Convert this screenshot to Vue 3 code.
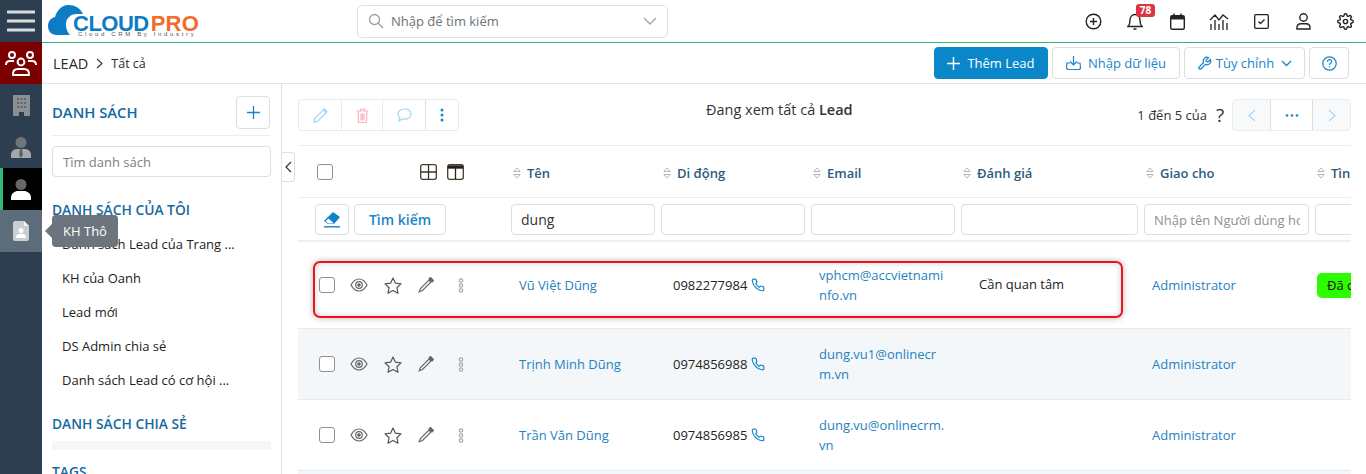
<script setup>
const lists = ['Danh sách Lead của Trang ...', 'KH của Oanh', 'Lead mới', 'DS Admin chia sẻ', 'Danh sách Lead có cơ hội ...']
const heads = ['Tên', 'Di động', 'Email', 'Đánh giá', 'Giao cho', 'Tìn']
const rows = [
  { name: 'Vũ Việt Dũng', phone: '0982277984', email: 'vphcm@accvietnaminfo.vn', rate: 'Cần quan tâm', badge: 'Đã chuyển', cls: 'first' },
  { name: 'Trịnh Minh Dũng', phone: '0974856988', email: 'dung.vu1@onlinecrm.vn', rate: '', badge: '', cls: 'alt' },
  { name: 'Trần Văn Dũng', phone: '0974856985', email: 'dung.vu@onlinecrm.vn', rate: '', badge: '', cls: '' }
]
const gear = 'M19.4 15a1.65 1.65 0 0 0 .33 1.82l.06.06a2 2 0 0 1 0 2.83 2 2 0 0 1-2.83 0l-.06-.06a1.65 1.65 0 0 0-1.82-.33 1.65 1.65 0 0 0-1 1.51V21a2 2 0 0 1-2 2 2 2 0 0 1-2-2v-.09A1.65 1.65 0 0 0 9 19.4a1.65 1.65 0 0 0-1.82.33l-.06.06a2 2 0 0 1-2.83 0 2 2 0 0 1 0-2.83l.06-.06a1.65 1.65 0 0 0 .33-1.82 1.65 1.65 0 0 0-1.51-1H3a2 2 0 0 1-2-2 2 2 0 0 1 2-2h.09A1.65 1.65 0 0 0 4.6 9a1.65 1.65 0 0 0-.33-1.82l-.06-.06a2 2 0 0 1 0-2.83 2 2 0 0 1 2.83 0l.06.06a1.65 1.65 0 0 0 1.82.33H9a1.65 1.65 0 0 0 1-1.51V3a2 2 0 0 1 2-2 2 2 0 0 1 2 2v.09a1.65 1.65 0 0 0 1 1.51 1.65 1.65 0 0 0 1.82-.33l.06-.06a2 2 0 0 1 2.83 0 2 2 0 0 1 0 2.83l-.06.06a1.65 1.65 0 0 0-.33 1.82V9a1.65 1.65 0 0 0 1.51 1H21a2 2 0 0 1 2 2 2 2 0 0 1-2 2h-.09a1.65 1.65 0 0 0-1.51 1z'
const phone = 'M22 16.92v3a2 2 0 0 1-2.18 2 19.8 19.8 0 0 1-8.63-3.07 19.5 19.5 0 0 1-6-6 19.8 19.8 0 0 1-3.07-8.67A2 2 0 0 1 4.11 2h3a2 2 0 0 1 2 1.72c.13.96.36 1.9.7 2.81a2 2 0 0 1-.45 2.11L8.09 9.91a16 16 0 0 0 6 6l1.27-1.27a2 2 0 0 1 2.11-.45c.91.34 1.85.57 2.81.7A2 2 0 0 1 22 16.92z'
</script>

<template>
  <div class="app">
    <nav class="rail">
      <div class="rail-item">
        <svg width="28" height="22" viewBox="0 0 28 22"><path d="M1 2h26M1 11h26M1 20h26" stroke="#d9dde0" stroke-width="3" stroke-linecap="round"/></svg>
      </div>
      <div class="rail-item red">
        <svg width="32" height="28" viewBox="0 0 32 28" fill="none" stroke="#fff" stroke-width="2">
          <circle cx="7" cy="6" r="3"/><circle cx="25" cy="6" r="3"/><circle cx="16" cy="13" r="3.4"/>
          <path d="M1 16c0-3 2-4 4-4h4M31 16c0-3-2-4-4-4h-4"/>
          <path d="M8 26v-1c0-3 2-5 5-5h6c3 0 5 2 5 5v1z" stroke-linejoin="round"/>
        </svg>
      </div>
      <div class="rail-item">
        <svg width="17" height="21" viewBox="0 0 17 21"><path d="M0 0h17v21h-6v-4H6v4H0z" fill="#8a8f94"/><g fill="#5e656c"><rect x="4" y="3" width="2" height="2"/><rect x="7.5" y="3" width="2" height="2"/><rect x="11" y="3" width="2" height="2"/><rect x="4" y="7" width="2" height="2"/><rect x="7.5" y="7" width="2" height="2"/><rect x="11" y="7" width="2" height="2"/><rect x="4" y="11" width="2" height="2"/><rect x="7.5" y="11" width="2" height="2"/><rect x="11" y="11" width="2" height="2"/></g></svg>
      </div>
      <div class="rail-item">
        <svg width="20" height="21" viewBox="0 0 20 21"><circle cx="10" cy="5.5" r="5.5" fill="#6f757b"/><path d="M0 21v-3c0-4 3-6 6-6h8c3 0 6 2 6 6v3z" fill="#a4a8ac"/><path d="M9 12h2l1 6-2 3-2-3z" fill="#5b636b"/></svg>
      </div>
      <div class="rail-item active">
        <svg width="20" height="21" viewBox="0 0 20 21"><circle cx="10" cy="5.5" r="5.5" fill="#666"/><path d="M0 21v-2c0-5 4-7 7-7h6c3 0 7 2 7 7v2z" fill="#fff"/></svg>
      </div>
      <div class="rail-item hover">
        <svg width="16" height="20" viewBox="0 0 16 20"><path d="M2 0h9l5 5v13a2 2 0 0 1-2 2H2a2 2 0 0 1-2-2V2a2 2 0 0 1 2-2z" fill="#c9ced3"/><path d="M11 0l5 5h-5z" fill="#f4f5f6"/><circle cx="8" cy="9.5" r="2.5" fill="#fff"/><path d="M3 17v-1c0-2 2-3 3-3h4c1 0 3 1 3 3v1z" fill="#fff"/></svg>
      </div>
      <div class="tip">KH Thô</div>
    </nav>

    <div class="main">
      <header class="topbar">
        <div class="logo">
          <svg class="cloud" width="42" height="32" viewBox="0 0 42 32"><path d="M9 31C3 31 0 27 0 22c0-5 3-8 7-9 2-7 7-12 13-12 7 0 12 3 15 9h-6c-7 0-11 5-11 10 0 4 1 8 4 11z" fill="#0e7cc4"/></svg>
          <span class="logo-a">CLOUD</span><span class="logo-b">PRO</span>
          <span class="logo-c">Cloud CRM By Industry</span>
        </div>
        <div class="gsearch">
          <svg width="16" height="16" viewBox="0 0 16 16" fill="none" stroke="#9aa0a6" stroke-width="1.3"><circle cx="6.5" cy="6.5" r="5"/><path d="M10.2 10.2 15 15"/></svg>
          <span class="gs-text">Nhập để tìm kiếm</span>
          <svg width="14" height="8" viewBox="0 0 14 8" fill="none" stroke="#a2a6aa" stroke-width="1.3"><path d="M1 1l6 6 6-6"/></svg>
        </div>
        <div class="tools">
          <div class="tool"><svg width="17" height="17" viewBox="0 0 17 17" fill="none" stroke="#222" stroke-width="1.4"><circle cx="8.5" cy="8.5" r="7.3"/><path d="M8.5 5v7M5 8.5h7"/></svg></div>
          <div class="tool">
            <svg width="16" height="19" viewBox="0 0 16 19" fill="none" stroke="#222" stroke-width="1.4"><path d="M1 14.5h14c-1.5-1.5-2-3-2-6.500C13 5 11 2.500 8 2.500S3 5 3 8c0 3.500-.5 5-2 6.500zM6.500 17h3"/></svg>
            <span class="count">78</span>
          </div>
          <div class="tool"><svg width="15" height="17" viewBox="0 0 15 17"><rect x=".7" y="2.700" width="13.600" height="13.600" rx="1.500" fill="none" stroke="#222" stroke-width="1.400"/><path d="M1 3h13v3.500H1z" fill="#222"/><path d="M4 .5v3M11 .5v3" stroke="#222" stroke-width="1.400"/></svg></div>
          <div class="tool"><svg width="20" height="17" viewBox="0 0 20 17" fill="none" stroke="#222" stroke-width="1.300"><path d="M1 7l5-5 4 5 4-5 5 4"/><path d="M2 11v6M6 7v10M10 11v6M14 7v10M18 10v7"/></svg></div>
          <div class="tool"><svg width="15" height="15" viewBox="0 0 15 15" fill="none" stroke="#222" stroke-width="1.300"><rect x=".7" y=".7" width="13.600" height="13.600" rx="1"/><path d="M4.500 7.500l2 2 4-4"/></svg></div>
          <div class="tool"><svg width="15" height="17" viewBox="0 0 15 17" fill="none" stroke="#222" stroke-width="1.400"><circle cx="7.500" cy="4.500" r="3.700"/><path d="M1 16v-1.500C1 12 3 10.700 5 10.700h5c2 0 4 1.300 4 3.800V16z"/></svg></div>
          <div class="tool"><svg width="17" height="17" viewBox="0 0 24 24" fill="none" stroke="#222" stroke-width="2"><circle cx="12" cy="12" r="3"/><path :d="gear"/></svg></div>
        </div>
      </header>

      <div class="subbar">
        <div class="crumb"><span class="c1">LEAD</span>
          <svg width="7" height="11" viewBox="0 0 7 11" fill="none" stroke="#333" stroke-width="1.100"><path d="M1 1l5 4.500L1 10"/></svg>
          <span class="c2">Tất cả</span></div>
        <div class="actions">
          <button class="btn primary"><svg width="13" height="13" viewBox="0 0 13 13" stroke="#fff" stroke-width="1.500"><path d="M6.500 0v13M0 6.500h13"/></svg>Thêm Lead</button>
          <button class="btn wide1"><svg width="15" height="14" viewBox="0 0 15 14" fill="none" stroke="#1a85c8" stroke-width="1.200"><path d="M7.500 0v9M4 5.500l3.500 3.500L11 5.500M4 7H1l-.5 4.500a2 2 0 0 0 2 2h10a2 2 0 0 0 2-2L14 7h-3"/></svg>Nhập dữ liệu</button>
          <button class="btn wide2"><svg width="15" height="15" viewBox="0 0 24 24" fill="none" stroke="#1a85c8" stroke-width="2"><path d="M14.700 6.300a1 1 0 0 0 0 1.400l1.600 1.600a1 1 0 0 0 1.400 0l3.770-3.770a6 6 0 0 1-7.940 7.940l-6.910 6.910a2.120 2.120 0 0 1-3-3l6.910-6.910a6 6 0 0 1 7.940-7.940l-3.760 3.760z"/></svg>Tùy chỉnh<svg width="11" height="7" viewBox="0 0 11 7" fill="none" stroke="#1a85c8" stroke-width="1.300"><path d="M1 1l4.500 4.500L10 1"/></svg></button>
          <button class="btn help"><svg width="15" height="15" viewBox="0 0 15 15" fill="none" stroke="#1a85c8" stroke-width="1.200"><circle cx="7.500" cy="7.500" r="6.700"/><path d="M5.300 5.800c0-1.300 1-2.100 2.200-2.100 1.300 0 2.200.8 2.200 1.900 0 1.700-2.200 1.600-2.200 3.400M7.500 10.300v1.300"/></svg></button>
        </div>
      </div>

      <div class="body">
        <aside class="side">
          <div class="side-head"><h3>DANH SÁCH</h3>
            <button class="plus"><svg width="13" height="13" viewBox="0 0 13 13" stroke="#1a85c8" stroke-width="1.300"><path d="M6.500 0v13M0 6.500h13"/></svg></button>
          </div>
          <div class="side-input">Tìm danh sách</div>
          <h3 class="sec-my">DANH SÁCH CỦA TÔI</h3>
          <ul><li v-for="l in lists" :key="l">{{ l }}</li></ul>
          <h3 class="sec-share">DANH SÁCH CHIA SẺ</h3>
          <div class="empty"></div>
          <h3 class="sec-tags">TAGS</h3>
        </aside>

        <div class="collapse"><svg width="7" height="12" viewBox="0 0 7 12" fill="none" stroke="#333" stroke-width="1.200"><path d="M6 1L1 6l5 5"/></svg></div>

        <section class="content">
          <div class="toolbar">
            <div class="group">
              <span class="cell c43"><svg width="15" height="15" viewBox="0 0 16 16" fill="none" stroke="#a4d7f5" stroke-width="1.300"><path d="M11 2l3 3-9 9-4 1 1-4z"/><path d="M11 2l1-1 3 3-1 1z" fill="#a4d7f5"/></svg></span>
              <span class="cell c41"><svg width="13" height="15" viewBox="0 0 13 15" fill="none" stroke="#f7b6bd" stroke-width="1.200"><path d="M.5 3h12M4.500 3V1h4v2M2 3l.6 11.500h7.800L11 3M5 5.500v7M6.500 5.500v7M8 5.500v7"/></svg></span>
              <span class="cell c43"><svg width="15" height="14" viewBox="0 0 15 14" fill="none" stroke="#a4d7f5" stroke-width="1.200"><path d="M7.500 1C3.500 1 1 3.200 1 6c0 1.400.7 2.600 1.800 3.500L2 13l3.500-2c.6.200 1.300.2 2 .2 4 0 6.500-2.300 6.500-5.200S11.500 1 7.500 1z"/></svg></span>
              <span class="cell dots"><svg width="4" height="14" viewBox="0 0 4 14" fill="#1a85c8"><circle cx="2" cy="2" r="1.500"/><circle cx="2" cy="7" r="1.500"/><circle cx="2" cy="12" r="1.500"/></svg></span>
            </div>
            <div class="title">Đang xem tất cả <b>Lead</b></div>
            <div class="pager">
              <span class="count-text">1 đến 5 của</span>
              <span class="q">?</span>
              <div class="pgroup">
                <span class="pcell p1"><svg width="8" height="13" viewBox="0 0 8 13" fill="none" stroke="#a4d7f5" stroke-width="1.200"><path d="M7 1L1 6.500 7 12"/></svg></span>
                <span class="pcell p2"><svg width="14" height="3" viewBox="0 0 14 3" fill="#1a85c8"><circle cx="2" cy="1.500" r="1.300"/><circle cx="7" cy="1.500" r="1.300"/><circle cx="12" cy="1.500" r="1.300"/></svg></span>
                <span class="pcell p3"><svg width="8" height="13" viewBox="0 0 8 13" fill="none" stroke="#a4d7f5" stroke-width="1.200"><path d="M1 1l6 5.500L1 12"/></svg></span>
              </div>
            </div>
          </div>

          <div class="table">
            <div class="grid head">
              <div class="h-first">
                <span class="box hbox"></span>
                <span class="hicons">
                  <svg width="17" height="16" viewBox="0 0 17 16" fill="none" stroke="#333" stroke-width="1.300"><rect x=".7" y=".7" width="15.600" height="14.600" rx="2" stroke="#4a3a2a"/><path d="M8.500 1v14M1 8h15"/></svg>
                  <svg width="17" height="16" viewBox="0 0 17 16" fill="none" stroke="#222" stroke-width="1.300"><rect x=".7" y=".7" width="15.600" height="14.600" rx="2" stroke="#4a3a2a"/><path d="M1 3h15" stroke-width="3.400"/><path d="M8.500 4v11"/></svg>
                </span>
              </div>
              <div v-for="h in heads" :key="h" class="hcell">
                <svg width="8" height="12" viewBox="0 0 8 12" fill="none" stroke="#b5b8bb"><path d="M.8 4.500 4 1l3.200 3.500zM.8 7.500 4 11l3.200-3.500z"/></svg>{{ h }}
              </div>
            </div>

            <div class="grid filters">
              <div class="f-first">
                <button class="erase"><svg width="18" height="16" viewBox="0 0 18 16"><path d="M10 0l7 5-6 7H5L1 9z" fill="#0f83c9"/><path d="M5.500 6.500 11 11.500H5.300L2.600 9.300z" fill="#fff"/><path d="M1 14.800h16" stroke="#0f83c9" stroke-width="1.400"/></svg></button>
                <button class="find">Tìm kiếm</button>
              </div>
              <div class="fcell"><div class="finput val">dung</div></div>
              <div class="fcell"><div class="finput"></div></div>
              <div class="fcell"><div class="finput"></div></div>
              <div class="fcell"><div class="finput"></div></div>
              <div class="fcell"><div class="finput ph"><span>Nhập tên Người dùng hoặc Nhóm</span></div></div>
              <div class="fcell"><div class="finput"></div></div>
            </div>

            <div v-for="r in rows" :key="r.name" class="grid row" :class="r.cls">
              <div class="r-first">
                <span class="box"></span>
                <svg class="ri" width="18" height="14" viewBox="0 0 18 14" fill="none" stroke="#666" stroke-width="1.200"><path d="M1 7c2-3.700 5-6 8-6s6 2.300 8 6c-2 3.700-5 6-8 6S3 10.700 1 7z"/><circle cx="9" cy="7" r="3.300"/><circle cx="9" cy="7" r="1.200" fill="#666"/></svg>
                <svg class="ri" width="18" height="17" viewBox="0 0 18 17" fill="none" stroke="#555" stroke-width="1.200"><path d="M9 1l2.400 5.200 5.600.7-4.100 3.800 1.100 5.600L9 13.500l-5 2.800 1.100-5.600L1 6.900l5.600-.7z" stroke-linejoin="round"/></svg>
                <svg class="ri" width="16" height="16" viewBox="0 0 16 16" fill="none" stroke="#666" stroke-width="1.200"><path d="M11 3l2 2-8.500 8.500-3.300 1.300 1.300-3.300z"/><path d="M11.500 1.500l1-1 3 3-1.500 1.500-3-3z" fill="#666"/></svg>
                <svg class="rdots" width="6" height="15" viewBox="0 0 6 15" fill="none" stroke="#a3a8ac" stroke-width="1.200"><circle cx="3" cy="2.500" r="1.700"/><circle cx="3" cy="7.500" r="1.700"/><circle cx="3" cy="12.500" r="1.700"/></svg>
              </div>
              <div class="name link">{{ r.name }}</div>
              <div class="tel">{{ r.phone }}<svg width="14" height="14" viewBox="0 0 24 24" fill="none" stroke="#1a85c8" stroke-width="2"><path :d="phone"/></svg></div>
              <div class="mail link">{{ r.email }}</div>
              <div class="rate">{{ r.rate }}</div>
              <div class="owner link">Administrator</div>
              <div class="stat"><span v-if="r.badge" class="badge">{{ r.badge }}</span></div>
            </div>
            <div class="row-next"></div>
            <div class="mark"></div>
          </div>
        </section>
      </div>
    </div>
  </div>
</template>

<style>
html, body { margin: 0; background: #fff; overflow: hidden; }
</style>

<style scoped>
.app { display: flex; width: 1366px; height: 474px; overflow: hidden; position: relative; font-family: "Open Sans", "Noto Sans", sans-serif; font-size: 13px; color: #222; }
h3 { margin: 0; font-size: 13.8px; font-weight: 600; color: #15699f; }
button { font-family: inherit; cursor: pointer; }

.rail { width: 42px; flex: none; background: #2c3e50; position: relative; }
.rail-item { height: 42px; display: flex; align-items: center; justify-content: center; box-sizing: border-box; }
.rail-item.red { background: #7c0000; }
.rail-item.active { background: #000; border-left: 3px solid #2fb978; padding-right: 3px; }
.rail-item.hover { background: #5c6c7b; }
.tip { position: absolute; left: 52px; top: 215px; width: 66px; height: 32px; background: #6c757d; color: #fff; border-radius: 4px; display: flex; align-items: center; justify-content: center; z-index: 5; font-size: 13px; }
.tip::before { content: ""; position: absolute; left: -7px; top: 9px; border: 7px solid transparent; border-left: 0; border-right-color: #6c757d; }

.main { flex: 1; min-width: 0; display: flex; flex-direction: column; }
.topbar { height: 42px; flex: none; box-sizing: content-box; border-bottom: 1px solid #34b57a; display: flex; align-items: center; }
.logo { width: 315px; height: 42px; flex: none; position: relative; box-sizing: border-box; padding: 12px 0 0 31px; font-family: "Liberation Sans", sans-serif; font-weight: 700; font-size: 22px; line-height: 24px; letter-spacing: -.5px; white-space: nowrap; }
.cloud { position: absolute; left: 6px; top: 4px; }
.logo-a { color: #0e7cc4; position: relative; }
.logo-b { color: #f26b2b; margin-left: 2px; letter-spacing: .2px; }
.logo-c { position: absolute; left: 36px; top: 31px; font-size: 6px; line-height: 6px; letter-spacing: 2.65px; color: #555; font-weight: 400; }
.gsearch { width: 311px; height: 33px; flex: none; box-sizing: border-box; border: 1px solid #dfe1e3; border-radius: 5px; display: flex; align-items: center; padding: 0 10px; gap: 7px; }
.gs-text { flex: 1; color: #6d737a; }
.tools { margin-left: auto; display: flex; margin-right: 0; }
.tool { width: 42px; height: 42px; display: flex; align-items: center; justify-content: center; position: relative; }
.count { position: absolute; left: 22px; top: 4px; width: 19px; height: 13px; background: #dc3545; color: #fff; border-radius: 3px; font-size: 10px; font-weight: 700; line-height: 13px; text-align: center; }

.subbar { height: 40px; flex: none; border-bottom: 1px solid #e2e3e5; display: flex; align-items: center; justify-content: space-between; padding: 0 17px 0 11px; }
.crumb { display: flex; align-items: center; gap: 8px; }
.c1 { font-size: 14.5px; color: #2b2b2b; }
.c2 { font-size: 12.5px; color: #2b2b2b; }
.actions { display: flex; gap: 4px; }
.btn { height: 32px; border: 1px solid #dcdee0; border-radius: 4px; background: #fff; color: #1a85c8; font-size: 13px; display: flex; align-items: center; justify-content: center; gap: 7px; padding: 0; }
.btn.primary { width: 114px; background: #0a87c9; border-color: #0a87c9; color: #fff; }
.btn.wide1 { width: 128px; }
.btn.wide2 { width: 121px; gap: 4px; }
.btn.wide2 svg:last-child { margin-left: 3px; }
.btn.help { width: 40px; }

.body { flex: 1; min-height: 0; display: flex; position: relative; }
.side { width: 240px; flex: none; box-sizing: border-box; border-right: 1px solid #dfe0e2; padding: 0 10px; }
.side-head { height: 52px; border-bottom: 1px solid #eceded; display: flex; align-items: center; justify-content: space-between; padding-right: 1px; box-sizing: border-box; }
.side-head h3 { padding-top: 4px; font-size: 14.8px; }
.plus { width: 34px; height: 33px; margin-top: 5px; border: 1px solid #dcdee0; border-radius: 4px; background: #fff; display: flex; align-items: center; justify-content: center; padding: 0; }
.side-input { margin-top: 10px; height: 31px; box-sizing: border-box; border: 1px solid #dcdee0; border-radius: 4px; color: #7b8086; display: flex; align-items: center; padding-left: 10px; }
.sec-my { margin-top: 23px; line-height: 20px; }
ul { list-style: none; margin: 7px 0 0; padding: 0 0 0 10px; }
li { height: 34px; line-height: 34px; white-space: nowrap; }
.sec-share { margin-top: 17px; line-height: 20px; }
.empty { margin-top: 7px; height: 9px; background: #f6f6f6; }
.sec-tags { margin-top: 12px; line-height: 20px; }

.collapse { position: absolute; left: 240px; top: 68px; width: 13px; height: 30px; box-sizing: border-box; border: 1px solid #dcdee0; border-left: 0; border-radius: 0 4px 4px 0; display: flex; align-items: center; justify-content: center; background: #fff; }

.content { width: 1053px; margin-left: 16px; flex: none; overflow: hidden; padding-top: 15px; box-sizing: border-box; }
.toolbar { height: 46px; display: flex; align-items: flex-start; border-bottom: 1px solid #eceded; position: relative; }
.group { display: flex; height: 32px; width: 161px; box-sizing: border-box; border: 1px solid #e9eaec; border-radius: 4px; }
.cell { display: flex; align-items: center; justify-content: center; border-right: 1px solid #e9eaec; box-sizing: border-box; }
.c43 { width: 43px; }
.c41 { width: 41px; }
.dots { flex: 1; border-right: 0; border-left: 1px solid #dcdee0; margin-left: -1px; }
.title { position: absolute; left: 408px; top: 0; font-size: 14.5px; line-height: 22px; color: #333; }
.title b { font-weight: 600; }
.pager { margin-left: auto; display: flex; align-items: center; height: 32px; }
.count-text { color: #333; }
.q { margin: 0 7px 0 8px; font-size: 19px; line-height: 20px; font-weight: 500; color: #333; width: 10px; text-align: center; }
.pgroup { display: flex; height: 32px; width: 119px; box-sizing: border-box; border: 1px solid #eceded; border-radius: 4px; background: #f8f9fa; }
.pcell { display: flex; align-items: center; justify-content: center; }
.p1 { width: 37px; }
.p2 { width: 43px; background: #fff; border: 1px solid #dcdee0; border-width: 0 1px; box-sizing: border-box; }
.p3 { flex: 1; }

.table { position: relative; height: 400px; }
.grid { display: grid; grid-template-columns: 210px 150px 150px 150px 183px 171px 60px; width: 1074px; }
.head { height: 51px; align-items: center; border-bottom: 1px solid #eceded; }
.h-first { display: flex; align-items: center; padding-left: 19px; }
.box { width: 16px; height: 16px; box-sizing: border-box; border: 1px solid #8e9295; border-radius: 3px; background: #fff; flex: none; }
.hicons { display: flex; gap: 10px; margin-left: 87px; }
.hcell { display: flex; align-items: center; gap: 6px; padding-left: 5px; padding-top: 2px; font-weight: 600; color: #2c5b7e; white-space: nowrap; }

.filters { height: 42px; border-bottom: 2px solid #eeefef; align-items: start; }
.f-first { display: flex; gap: 5px; padding: 6px 0 0 17px; }
.erase { width: 34px; height: 31px; border: 1px solid #dcdee0; border-radius: 4px; background: #fff; display: flex; align-items: center; justify-content: center; padding: 0; }
.find { width: 92px; height: 31px; border: 1px solid #dcdee0; border-radius: 4px; background: #fff; color: #1a85c8; font-size: 14px; font-weight: 600; padding: 0; }
.fcell { padding: 6px 3px 0 3px; }
.finput { height: 31px; box-sizing: border-box; border: 1px solid #dcdee0; border-radius: 4px; display: flex; align-items: center; padding: 0 8px 0 9px; white-space: nowrap; }
.val { font-size: 14px; color: #333; }
.ph { color: #8b9096; font-size: 13px; }
.ph span { overflow: hidden; display: block; }

.row { height: 71px; box-sizing: border-box; align-items: center; border-bottom: 1px solid #e8eaec; }
.row.first { height: 87px; }
.row.alt { background: #f4f7fa; }
.r-first { display: flex; align-items: center; padding-left: 21px; }
.ri { margin-left: 16px; }
.ri:first-of-type { margin-left: 15px; }
.rdots { margin-left: 24px; }
.link { color: #1f82c0; }
.name { padding-left: 11px; }
.tel { padding-left: 15px; display: flex; align-items: center; gap: 4px; }
.mail { padding: 0 10px 0 11px; word-break: break-all; line-height: 20px; }
.rate { padding-left: 21px; padding-bottom: 2px; }
.owner { padding-left: 11px; }
.stat { padding-left: 5px; }
.badge { display: inline-block; height: 25px; line-height: 25px; padding: 0 10px; background: #2dfc00; border-radius: 5px; white-space: nowrap; color: #111; }
.row-next { height: 20px; background: #f4f7fa; }
.mark { position: absolute; left: 15px; top: 115px; width: 810px; height: 57px; box-sizing: border-box; border: 2px solid #f0111c; border-radius: 7px; box-shadow: 0 0 6px rgba(0,0,0,.3), inset 0 0 6px rgba(0,0,0,.18); pointer-events: none; }
</style>
